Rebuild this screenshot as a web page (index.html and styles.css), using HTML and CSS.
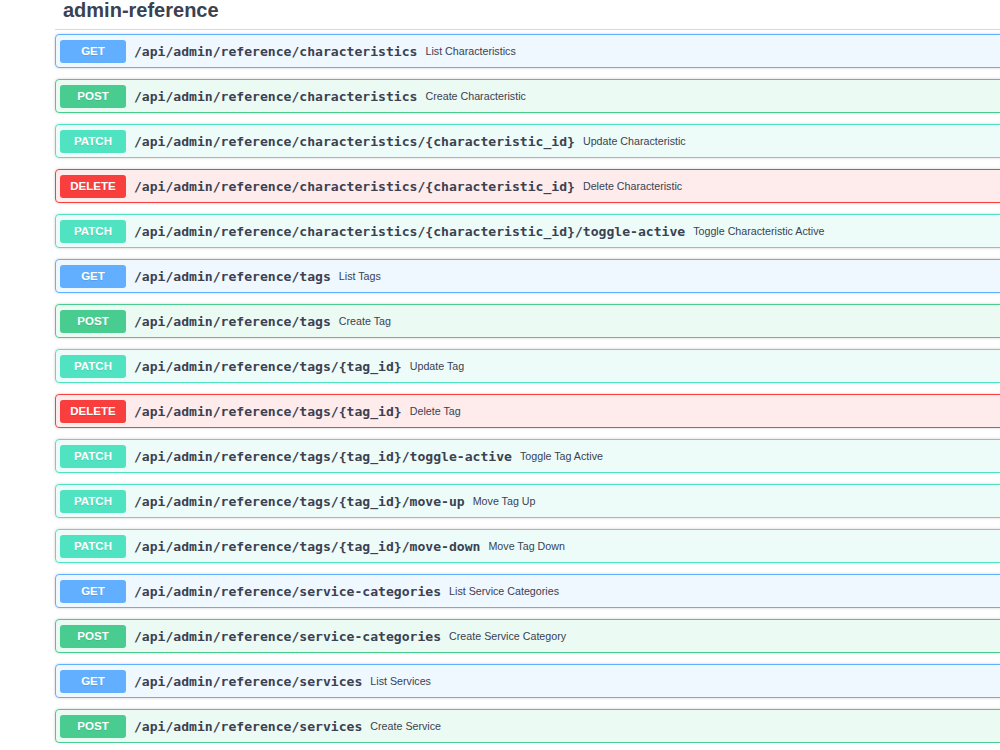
FILE: index.html
```html
<!DOCTYPE html>
<html lang="en">
<head>
    <meta charset="UTF-8">
    <title>admin-reference</title>
    <link rel="stylesheet" href="styles.css">
</head>
<body>
    <div class="wrapper">
        <h3 class="tag-title">admin-reference</h3>
        <div class="ops">
            <div class="op get"><span class="method">GET</span><span class="path">/api/admin/reference/characteristics</span><span class="desc">List Characteristics</span></div>
            <div class="op post"><span class="method">POST</span><span class="path">/api/admin/reference/characteristics</span><span class="desc">Create Characteristic</span></div>
            <div class="op patch"><span class="method">PATCH</span><span class="path">/api/admin/reference/characteristics/{characteristic_id}</span><span class="desc">Update Characteristic</span></div>
            <div class="op delete"><span class="method">DELETE</span><span class="path">/api/admin/reference/characteristics/{characteristic_id}</span><span class="desc">Delete Characteristic</span></div>
            <div class="op patch"><span class="method">PATCH</span><span class="path">/api/admin/reference/characteristics/{characteristic_id}/toggle-active</span><span class="desc">Toggle Characteristic Active</span></div>
            <div class="op get"><span class="method">GET</span><span class="path">/api/admin/reference/tags</span><span class="desc">List Tags</span></div>
            <div class="op post"><span class="method">POST</span><span class="path">/api/admin/reference/tags</span><span class="desc">Create Tag</span></div>
            <div class="op patch"><span class="method">PATCH</span><span class="path">/api/admin/reference/tags/{tag_id}</span><span class="desc">Update Tag</span></div>
            <div class="op delete"><span class="method">DELETE</span><span class="path">/api/admin/reference/tags/{tag_id}</span><span class="desc">Delete Tag</span></div>
            <div class="op patch"><span class="method">PATCH</span><span class="path">/api/admin/reference/tags/{tag_id}/toggle-active</span><span class="desc">Toggle Tag Active</span></div>
            <div class="op patch"><span class="method">PATCH</span><span class="path">/api/admin/reference/tags/{tag_id}/move-up</span><span class="desc">Move Tag Up</span></div>
            <div class="op patch"><span class="method">PATCH</span><span class="path">/api/admin/reference/tags/{tag_id}/move-down</span><span class="desc">Move Tag Down</span></div>
            <div class="op get"><span class="method">GET</span><span class="path">/api/admin/reference/service-categories</span><span class="desc">List Service Categories</span></div>
            <div class="op post"><span class="method">POST</span><span class="path">/api/admin/reference/service-categories</span><span class="desc">Create Service Category</span></div>
            <div class="op get"><span class="method">GET</span><span class="path">/api/admin/reference/services</span><span class="desc">List Services</span></div>
            <div class="op post"><span class="method">POST</span><span class="path">/api/admin/reference/services</span><span class="desc">Create Service</span></div>
        </div>
    </div>
</body>
</html>
```

FILE: styles.css
```css
body {
    margin: 0;
    background: #fff;
    font-family: "Liberation Sans", Arial, sans-serif;
    color: #3b4151;
    overflow: hidden;
}
.wrapper {
    padding-left: 55px;
    width: 1100px;
}
.tag-title {
    margin: 0 0 4px;
    padding: 0 0 9px 8px;
    font-size: 20px;
    line-height: 20px;
    font-weight: bold;
    color: #3b4151;
    border-bottom: 1px solid rgba(59, 65, 81, 0.2);
}
.ops {
    display: flex;
    flex-direction: column;
    gap: 11px;
}
.op {
    display: flex;
    align-items: center;
    gap: 8px;
    height: 34px;
    box-sizing: border-box;
    padding: 0 4px;
    border: 1px solid;
    border-radius: 4px;
    box-shadow: 0 0 3px rgba(0, 0, 0, 0.19);
}
.method {
    width: 66px;
    height: 23px;
    line-height: 23px;
    flex-shrink: 0;
    text-align: center;
    border-radius: 3px;
    color: #fff;
    font-size: 11.5px;
    font-weight: bold;
    text-shadow: 0 1px 0 rgba(0, 0, 0, 0.1);
}
.path {
    font-family: "DejaVu Sans Mono", monospace;
    font-weight: bold;
    font-size: 13.08px;
    color: #3b4151;
    white-space: nowrap;
}
.desc {
    font-size: 10.7px;
    color: #3b4151;
    white-space: nowrap;
}
.get {
    background: rgba(97, 175, 254, 0.1);
    border-color: #61affe;
}
.get .method {
    background: #61affe;
}
.post {
    background: rgba(73, 204, 144, 0.1);
    border-color: #49cc90;
}
.post .method {
    background: #49cc90;
}
.patch {
    background: rgba(80, 227, 194, 0.1);
    border-color: #50e3c2;
}
.patch .method {
    background: #50e3c2;
}
.delete {
    background: rgba(249, 62, 62, 0.1);
    border-color: #f93e3e;
}
.delete .method {
    background: #f93e3e;
}
```
